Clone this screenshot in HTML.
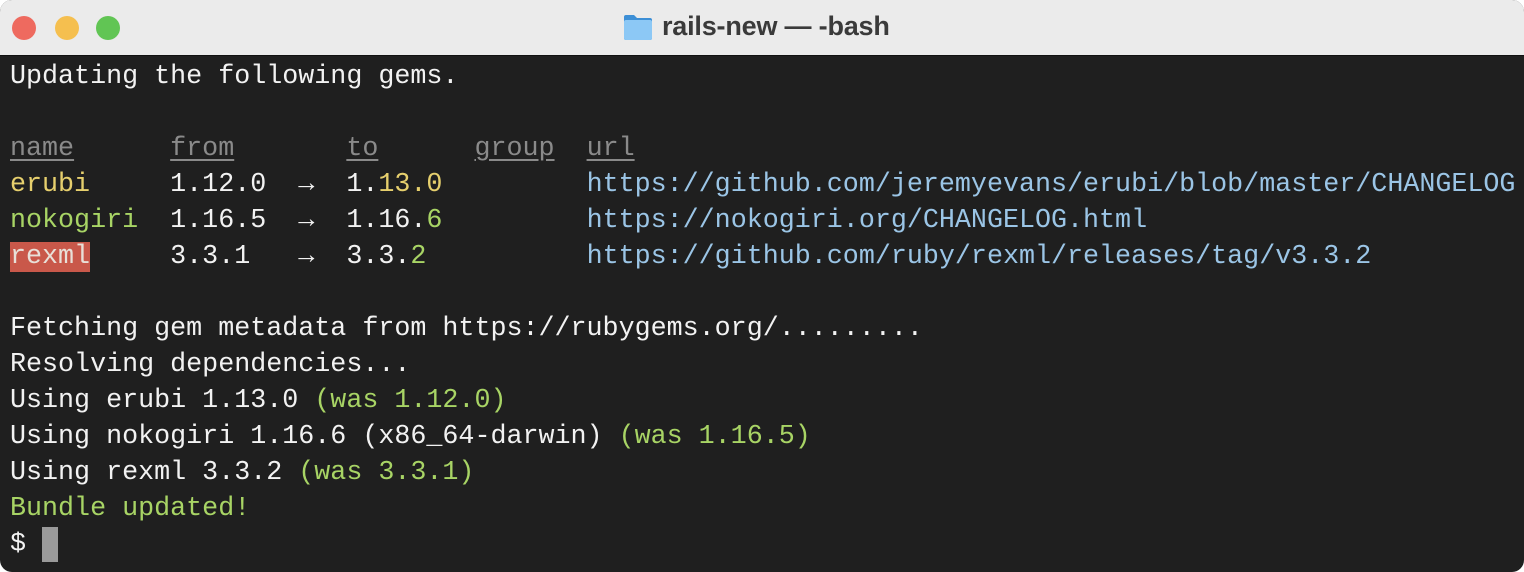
<!DOCTYPE html>
<html><head><style>
html,body{margin:0;padding:0;background:#fff;}
.win{position:absolute;left:0;top:0;width:1524px;height:572px;border-radius:12px;overflow:hidden;background:#1f1f1f;}
.title{position:absolute;left:0;top:0;width:1524px;height:56px;background:#ebebeb;border-bottom:1px solid #111;box-sizing:border-box;}
.dot{position:absolute;top:16px;width:24px;height:24px;border-radius:50%;}
.t{position:absolute;left:662px;top:11px;font:bold 27px "Liberation Sans",sans-serif;color:#3a3a3a;letter-spacing:-0.2px;}
.term{position:absolute;left:10px;top:59px;font:26.7px/36px "Liberation Mono",monospace;color:#f2f2f2;white-space:pre;}
.u{text-decoration:underline;color:#8a8a8a;text-underline-offset:4px;}
.y{color:#e6cf6d}.g{color:#a8d465}.b{color:#9bc5e6}
.r{background:#c9584a;color:#e8e0d8;}
.cur{display:inline-block;width:16px;height:35px;background:#9a9a9a;vertical-align:top;}
</style></head><body>
<div class="win">
<div class="title">
<div class="dot" style="left:12px;background:#ee6a5f;"></div>
<div class="dot" style="left:55px;background:#f5bf4f;"></div>
<div class="dot" style="left:96px;background:#61c554;"></div>
<svg style="position:absolute;left:623px;top:13px" width="30" height="28" viewBox="0 0 30 28"><path d="M1 4 Q1 2 3 2 H11 L14 5 H27 Q29 5 29 7 V25 Q29 27 27 27 H3 Q1 27 1 25Z" fill="#3d8fd6"/><path d="M1 9 Q1 7 3 7 H27 Q29 7 29 9 V25 Q29 27 27 27 H3 Q1 27 1 25Z" fill="#8cc8f5"/></svg>
<div class="t">rails-new — -bash</div>
</div>
<div class="term">Updating the following gems.

<span class="u">name</span>      <span class="u">from</span>       <span class="u">to</span>      <span class="u">group</span>  <span class="u">url</span>
<span class="y">erubi</span>     1.12.0  →  1.<span class="y">13.0</span>         <span class="b">https://github.com/jeremyevans/erubi/blob/master/CHANGELOG</span>
<span class="g">nokogiri</span>  1.16.5  →  1.16.<span class="g">6</span>         <span class="b">https://nokogiri.org/CHANGELOG.html</span>
<span class="r">rexml</span>     3.3.1   →  3.3.<span class="g">2</span>          <span class="b">https://github.com/ruby/rexml/releases/tag/v3.3.2</span>

Fetching gem metadata from https://rubygems.org/.........
Resolving dependencies...
Using erubi 1.13.0 <span class="g">(was 1.12.0)</span>
Using nokogiri 1.16.6 (x86_64-darwin) <span class="g">(was 1.16.5)</span>
Using rexml 3.3.2 <span class="g">(was 3.3.1)</span>
<span class="g">Bundle updated!</span>
$ <span class="cur"></span></div>
</div>
</body></html>
